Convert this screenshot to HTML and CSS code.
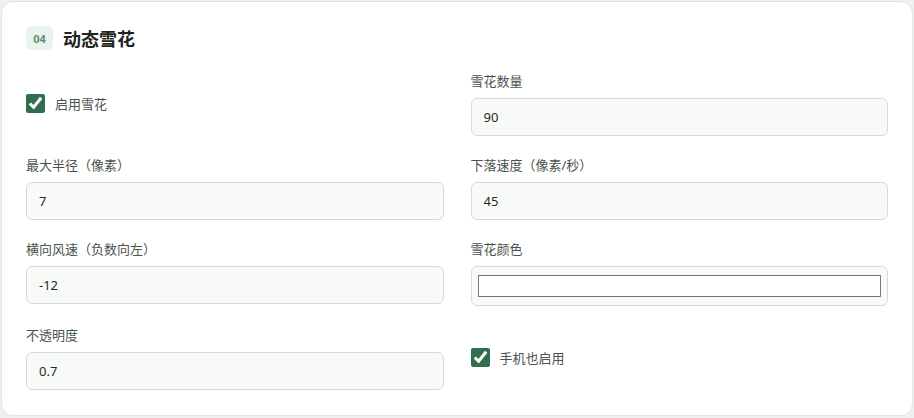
FILE: index.html
```html
<!DOCTYPE html>
<html lang="zh-CN">
<head>
    <meta charset="UTF-8">
    <meta name="viewport" content="width=device-width, initial-scale=1.0">
    <title>动态雪花</title>
    <link rel="stylesheet" href="styles.css">
</head>
<body>
    <section class="card">
        <!-- Section header -->
        <div class="card-header">
            <span class="step-badge">04</span>
            <h2>动态雪花</h2>
        </div>

        <div class="form-grid">
            <div class="field field-check">
                <label class="check">
                    <input type="checkbox" checked>
                    <span>启用雪花</span>
                </label>
            </div>
            <div class="field">
                <label class="field-label">雪花数量</label>
                <input class="text-input" type="text" value="90">
            </div>

            <div class="field">
                <label class="field-label">最大半径（像素）</label>
                <input class="text-input" type="text" value="7">
            </div>
            <div class="field">
                <label class="field-label">下落速度（像素/秒）</label>
                <input class="text-input" type="text" value="45">
            </div>

            <div class="field">
                <label class="field-label">横向风速（负数向左）</label>
                <input class="text-input" type="text" value="-12">
            </div>
            <div class="field">
                <label class="field-label">雪花颜色</label>
                <input class="color-input" type="color" value="#ffffff">
            </div>

            <div class="field">
                <label class="field-label">不透明度</label>
                <input class="text-input" type="text" value="0.7">
            </div>
            <div class="field field-check">
                <label class="check">
                    <input type="checkbox" checked>
                    <span>手机也启用</span>
                </label>
            </div>
        </div>
    </section>
</body>
</html>
```

FILE: styles.css
```css
body {
    margin: 0;
    padding: 1px;
    background-color: #eef1ee;
    font-family: "Noto Sans", "Noto Sans CJK SC", sans-serif;
    color: #1f2a24;
}

.card {
    box-sizing: border-box;
    height: 415px;
    background: #ffffff;
    border: 1px solid #dfe5e1;
    border-radius: 12px;
    padding: 23px 24px;
}

.card-header {
    display: flex;
    align-items: center;
    gap: 10px;
    margin-bottom: 20px;
}

.step-badge {
    width: 27px;
    height: 24px;
    border-radius: 6px;
    background: #e9f2ec;
    color: #668c74;
    font-size: 11px;
    font-weight: 700;
    display: flex;
    align-items: center;
    justify-content: center;
}

.card-header h2 {
    margin: 0;
    font-size: 18px;
    font-weight: 700;
    color: #1d2520;
}

.form-grid {
    display: grid;
    grid-template-columns: 1fr 1fr;
    column-gap: 27px;
    row-gap: 19px;
}

.field {
    display: flex;
    flex-direction: column;
}

.field-label {
    font-size: 13px;
    line-height: 20px;
    color: #4a534e;
    margin-bottom: 7px;
}

.text-input {
    box-sizing: border-box;
    height: 38px;
    padding: 0 12px;
    border: 1px solid #d3dcd6;
    border-radius: 6px;
    background: #f8faf8;
    font-family: inherit;
    font-size: 13px;
    color: #1f2a24;
    outline: none;
}

.color-input {
    box-sizing: border-box;
    width: 100%;
    height: 40px;
    padding: 4px;
    border: 1px solid #d3dcd6;
    border-radius: 6px;
    background: #f8faf8;
    cursor: pointer;
}

.field-check {
    justify-content: center;
}

.check {
    display: flex;
    align-items: center;
    gap: 10px;
    font-size: 13px;
    color: #4a534e;
    cursor: pointer;
}

.check input {
    width: 19px;
    height: 19px;
    margin: 0;
    accent-color: #2f6e4f;
}
```
